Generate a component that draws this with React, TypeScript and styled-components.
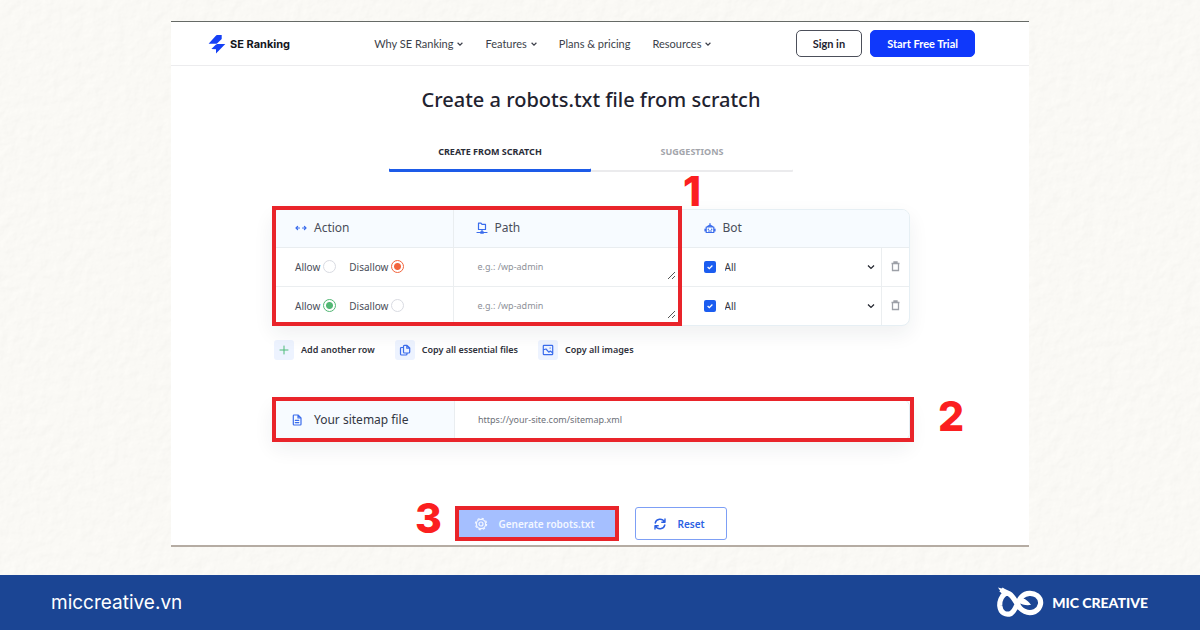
import React from "react";
import styled, { createGlobalStyle, css } from "styled-components";

const ui = '"Noto Sans", "Open Sans", sans-serif';
const brand = 'Lato, "Noto Sans", sans-serif';
const bold = 'Inter, "Liberation Sans", sans-serif';

const GlobalStyle = createGlobalStyle`
  *, *::before, *::after { box-sizing: border-box; }
  body { margin: 0; background: #faf9f5; font-family: ${ui}; color: #1f2330; }
  button, input, select, textarea { font: inherit; color: inherit; }
`;

const Page = styled.div`
  position: relative;
  display: flex;
  flex-direction: column;
  min-height: 100vh;
`;

const Paper = styled.svg`
  position: absolute;
  inset: 0;
  width: 100%;
  height: 100%;
`;

const Stage = styled.main`
  position: relative;
  flex: 1;
  padding: 21px 24px 28px;
`;

const Sheet = styled.section`
  max-width: 858px;
  margin: 0 auto;
  background: #fff;
  border-top: 1px solid #666a66;
  border-bottom: 2px solid #b5aca3;
`;

const TopBar = styled.header`
  display: flex;
  align-items: center;
  justify-content: space-between;
  height: 44px;
  padding: 0 54px 0 37px;
  border-bottom: 1px solid #ececee;
`;

const Logo = styled.a`
  display: flex;
  align-items: center;
  gap: 4px;
  color: #14161c;
  font: 700 11px/16px ${bold};
  text-decoration: none;
`;

const Nav = styled.nav`
  display: flex;
  gap: 22px;
`;

const NavLink = styled.a`
  display: flex;
  align-items: center;
  gap: 4px;
  color: #3c3f4a;
  font: 400 11px/16px ${brand};
  text-decoration: none;
`;

const Account = styled.div`
  display: flex;
  gap: 8px;
`;

const AccountButton = styled.button<{ $primary?: boolean }>`
  height: 27px;
  padding: 0 16px;
  border: 1px solid ${(p) => (p.$primary ? "#0f38fb" : "#4c4f5a")};
  border-radius: 5px;
  background: ${(p) => (p.$primary ? "#0f38fb" : "#fff")};
  color: ${(p) => (p.$primary ? "#fff" : "#1f2330")};
  font: 700 11px/16px ${brand};
`;

const Content = styled.div`
  padding: 19px 119px 4px 101px;
`;

const Title = styled.h1`
  margin: 0;
  text-align: center;
  font-size: 20px;
  line-height: 30px;
  font-weight: 500;
`;

const Tabs = styled.div`
  display: grid;
  grid-template-columns: 1fr 1fr;
  max-width: 404px;
  margin: 20px auto 0;
`;

const Tab = styled.button<{ $active?: boolean }>`
  height: 37px;
  padding: 0 0 3px;
  border: 0;
  border-radius: 1px;
  background: none;
  box-shadow: inset 0 ${(p) => (p.$active ? "-3px #1d5be8" : "-2px #ebebed")};
  color: ${(p) => (p.$active ? "#2a2d38" : "#a3a5ab")};
  font-size: 9px;
  line-height: 12px;
  font-weight: 700;
`;

const Marked = styled.div`
  position: relative;
`;

const RulesArea = styled(Marked)`
  margin-top: 37px;
`;

const Frame = styled.div<{ $right: string; $top: string; $bottom: string }>`
  position: absolute;
  left: 0;
  top: ${(p) => p.$top};
  right: ${(p) => p.$right};
  bottom: ${(p) => p.$bottom};
  border: 4px solid #e9242a;
  pointer-events: none;
`;

const Step = styled.span<{ $left: string; $top: string }>`
  position: absolute;
  left: ${(p) => p.$left};
  top: ${(p) => p.$top};
  color: #fb1f20;
  font: 800 41px/40px ${bold};
`;

const Card = styled.div`
  overflow: hidden;
  border: 1px solid #e6eff4;
  border-radius: 8px;
  background: #fff;
  box-shadow: 0 8px 20px rgba(30, 40, 60, 0.07);
`;

const Rules = styled.table`
  width: 100%;
  border-collapse: collapse;
  table-layout: fixed;
`;

const Head = styled.th`
  height: 37px;
  padding: 0;
  background: #f7fbff;
  border-bottom: 1px solid #e9edf0;
  text-align: left;
  font-weight: 400;
  & + & { border-left: 1px solid #e9edf0; }
  &:last-child { border-left-color: transparent; }
`;

const HeadLabel = styled.span`
  display: flex;
  align-items: center;
  gap: 7px;
  padding-left: 22px;
  color: #4a4e5a;
  font-size: 12px;
  line-height: 18px;
`;

const Cell = styled.td`
  position: relative;
  height: 39px;
  padding: 0;
  & + & { border-left: 1px solid #ebeef0; }
  tr + tr > & { border-top: 1px solid #ebeef0; }
`;

const Choices = styled.div`
  display: flex;
  gap: 13px;
  padding-left: 22px;
`;

const Choice = styled.label`
  display: flex;
  align-items: center;
  gap: 3px;
  color: #4a4e5a;
  font-size: 10px;
  line-height: 14px;
`;

const Radio = styled.input<{ $tone: string }>`
  appearance: none;
  width: 13px;
  height: 13px;
  margin: 0;
  border: 1px solid #d9dbe2;
  border-radius: 50%;
  background: #fff;
  &:checked {
    border-color: ${(p) => p.$tone};
    background: radial-gradient(circle, ${(p) => p.$tone} 0 3px, #fff 4px);
  }
`;

const PathBox = styled.textarea`
  display: block;
  width: 100%;
  height: 38px;
  padding: 12px 24px;
  border: 0;
  background: transparent;
  resize: none;
  overflow: hidden;
  font-size: 9px;
  line-height: 14px;
  &::placeholder { color: #8e9199; }
`;

const Grip = styled.svg`
  position: absolute;
  right: 5px;
  bottom: 6px;
`;

const BotChoice = styled.div`
  position: relative;
  display: flex;
  align-items: center;
  gap: 9px;
  padding: 0 6px 0 22px;
  svg { position: absolute; right: 6px; pointer-events: none; }
`;

const CheckWrap = styled.span`
  position: relative;
  display: flex;
  && svg { right: 2px; top: 2px; }
`;

const Check = styled.input`
  appearance: none;
  width: 12px;
  height: 12px;
  margin: 0;
  border-radius: 2px;
  background: #1b5df0;
`;

const BotSelect = styled.select`
  appearance: none;
  flex: 1;
  min-width: 0;
  padding: 0;
  border: 0;
  background: none;
  color: #33363f;
  font-size: 10px;
  line-height: 14px;
`;

const IconButton = styled.button`
  display: flex;
  justify-content: center;
  width: 100%;
  padding: 0;
  border: 0;
  background: none;
`;

const Extras = styled.div`
  display: flex;
  gap: 20px;
  margin-top: 14px;
  padding-left: 2px;
`;

const Extra = styled.button`
  display: flex;
  align-items: center;
  gap: 7px;
  padding: 0;
  border: 0;
  background: none;
  color: #2f323c;
  font-size: 9px;
  line-height: 14px;
  font-weight: 600;
`;

const Tile = styled.span`
  display: grid;
  place-items: center;
  width: 20px;
  height: 20px;
  border-radius: 3px;
  background: #edf3ff;
`;

const Sitemap = styled(Card)`
  display: grid;
  grid-template-columns: 182px 1fr;
  height: 42px;
  margin-top: 39px;
`;

const SitemapLabel = styled.label`
  display: flex;
  align-items: center;
  gap: 11px;
  padding-left: 18px;
  border-right: 1px solid #e9edf0;
  background: #f7fbff;
  color: #33363f;
  font-size: 12px;
  line-height: 18px;
`;

const SitemapInput = styled.input`
  min-width: 0;
  padding: 0 23px 2px;
  border: 0;
  font-size: 9px;
  &::placeholder { color: #6d7078; }
`;

const Actions = styled.div`
  display: flex;
  align-items: center;
  justify-content: center;
  gap: 16px;
  margin-top: 65px;
`;

const ActionButton = styled.button<{ $filled?: boolean }>`
  display: flex;
  align-items: center;
  justify-content: center;
  gap: 10px;
  height: 33px;
  padding: 0 21px 0 17px;
  border: 1px solid #7d9ff5;
  border-radius: 3px;
  background: #fff;
  color: #2b5fe3;
  font-size: 10px;
  line-height: 16px;
  font-weight: 600;
  ${(p) => p.$filled && css`
    height: 35px;
    padding: 0 21px 0 15px;
    border: 4px solid #e9242a;
    border-radius: 0;
    background: #a5bfff;
    color: #f3f7ff;
  `}
`;

const Footer = styled.footer`
  position: relative;
  display: flex;
  align-items: center;
  justify-content: space-between;
  height: 55px;
  padding: 0 52px 0 51px;
  background: #1b4594;
  color: #fff;
`;

const Site = styled.a`
  color: #fff;
  font: 400 19px/24px ${bold};
  text-decoration: none;
`;

const Maker = styled.div`
  display: flex;
  align-items: center;
  gap: 8px;
  font: 900 14px/20px ${brand};
`;

const Chevron = () => (
  <svg width="6" height="6" viewBox="0 0 6 6" fill="none" stroke="currentColor" strokeWidth="1.2"><path d="M.6 1.8 3 4.1 5.4 1.8" /></svg>
);

const blue = { fill: "none", stroke: "#3a6cec", strokeLinecap: "round", strokeLinejoin: "round" } as const;

const Row = ({ n, allow }: { n: number; allow: boolean }) => (
  <tr>
    <Cell>
      <Choices>
        <Choice>Allow<Radio $tone="#52b774" type="radio" name={`action-${n}`} defaultChecked={allow} /></Choice>
        <Choice>Disallow<Radio $tone="#f2643c" type="radio" name={`action-${n}`} defaultChecked={!allow} /></Choice>
      </Choices>
    </Cell>
    <Cell>
      <PathBox aria-label="Path" placeholder="e.g.: /wp-admin" />
      <Grip width="9" height="9" viewBox="0 0 9 9" stroke="#555" fill="none"><path d="M1 8 8 1M5 8 8 5" /></Grip>
    </Cell>
    <Cell>
      <BotChoice>
        <CheckWrap>
          <Check type="checkbox" aria-label="Use bot" defaultChecked />
          <svg width="8" height="8" viewBox="0 0 8 8" fill="none" stroke="#fff" strokeWidth="1.3"><path d="M1.6 4 3.3 5.6 6.4 2.5" /></svg>
        </CheckWrap>
        <BotSelect aria-label="Bot"><option>All</option></BotSelect>
        <svg width="8" height="8" viewBox="0 0 8 8" fill="none" stroke="#22252e" strokeWidth="1.3"><path d="M1 2.5 4 5.4 7 2.5" /></svg>
      </BotChoice>
    </Cell>
    <Cell>
      <IconButton aria-label="Delete row">
        <svg width="9" height="11" viewBox="0 0 9 11" fill="none" stroke="#9da0a7" strokeWidth="1.3"><path d="M.5 2.5h8M3 2.300V1h3v1.300M1.500 2.700V9.500h6V2.700" /></svg>
      </IconButton>
    </Cell>
  </tr>
);

export default function App() {
  return (
    <Page>
      <GlobalStyle />
      <Paper aria-hidden="true">
        <filter id="grain">
          <feTurbulence type="fractalNoise" baseFrequency="0.09" numOctaves="4" seed="4" />
          <feDiffuseLighting surfaceScale="0.5" lightingColor="#fdfcf8" diffuseConstant="1.13"><feDistantLight azimuth="45" elevation="60" /></feDiffuseLighting>
        </filter>
        <rect width="100%" height="100%" filter="url(#grain)" opacity="0.4" />
      </Paper>
      <Stage>
        <Sheet>
          <TopBar>
            <Logo href="#">
              <svg width="18" height="20" viewBox="0 0 18 20" fill="#1540f5"><path d="M.6 9.700 7.600 2 8.800 1H13.700V5L9.600 9 8.600 9.700zM3.400 14.900 7.700 10.700 9.300 10H17.300L8 19.600V15.200z" /></svg>
              SE Ranking
            </Logo>
            <Nav>
              <NavLink href="#">Why SE Ranking<Chevron /></NavLink>
              <NavLink href="#">Features<Chevron /></NavLink>
              <NavLink href="#">Plans &amp; pricing</NavLink>
              <NavLink href="#">Resources<Chevron /></NavLink>
            </Nav>
            <Account>
              <AccountButton>Sign in</AccountButton>
              <AccountButton $primary>Start Free Trial</AccountButton>
            </Account>
          </TopBar>
          <Content>
            <Title>Create a robots.txt file from scratch</Title>
            <Tabs role="tablist">
              <Tab role="tab" aria-selected="true" $active>CREATE FROM SCRATCH</Tab>
              <Tab role="tab" aria-selected="false">SUGGESTIONS</Tab>
            </Tabs>
            <RulesArea>
              <Card>
                <Rules>
                  <colgroup><col width="180" /><col /><col width="200" /><col width="28" /></colgroup>
                  <thead>
                    <tr>
                      <Head><HeadLabel>
                        <svg width="12" height="8" viewBox="0 0 12 8" {...blue} strokeWidth="1.2"><path d="M1 4h3.500M7.500 4H11M2.600 2.400 1 4l1.600 1.600M9.400 2.400 11 4l-1.600 1.600" /></svg>Action
                      </HeadLabel></Head>
                      <Head><HeadLabel>
                        <svg width="12" height="12" viewBox="0 0 12 12" {...blue} strokeWidth="1.2"><path d="M2.500 1.200H5l1 1.200h3.500V7.500h-7zM6 7.500V10M1 10.500h3.500M7.500 10.500H11M4.800 9.800h2.400v1.400H4.800z" /></svg>Path
                      </HeadLabel></Head>
                      <Head colSpan={2}><HeadLabel>
                        <svg width="12" height="12" viewBox="0 0 12 12" {...blue} strokeWidth="1.200"><path d="M2.200 5h7.600v5.500H2.200zM6 5V1.500M3.500 4.500 6 3l2.500 1.500M1 7v2M11 7v2M4.300 7v.4M7.700 7v.4M4.500 9h3" /></svg>Bot
                      </HeadLabel></Head>
                    </tr>
                  </thead>
                  <tbody><Row n={1} allow={false} /><Row n={2} allow /></tbody>
                </Rules>
              </Card>
              <Frame $right="228px" $top="-3px" $bottom="0" />
              <Step $left="411px" $top="-38px">1</Step>
            </RulesArea>
            <Extras>
              <Extra><Tile><svg width="10" height="10" viewBox="0 0 10 10" {...blue} stroke="#4cbb78"><path d="M5 1v8M1 5h8" /></svg></Tile>Add another row</Extra>
              <Extra><Tile><svg width="12" height="12" viewBox="0 0 12 12" {...blue} strokeWidth="1.2"><path d="M5.500 1.300H8L10.700 4v4q0 1-1 1H5.500q-1 0-1-1V2.300q0-1 1-1zM7.800 1.500V4.200h2.700M4.300 3.500H2.500q-1 0-1 1V10q0 1 1 1H7q1 0 1-1V9.200" /></svg></Tile>Copy all essential files</Extra>
              <Extra><Tile><svg width="12" height="12" viewBox="0 0 12 12" {...blue} strokeWidth="1.2"><path d="M2 1.300h8q.7 0 .7.7v8q0 .7-.7.7H2q-.7 0-.7-.7V2q0-.7.700-.7zM1.500 5.800 4 5l2.800 3.200L8.300 7l2.200 1.700M8 4h.3" /></svg></Tile>Copy all images</Extra>
            </Extras>
            <Marked>
              <Sitemap>
                <SitemapLabel htmlFor="sitemap">
                  <svg width="12" height="12" viewBox="0 0 12 12" {...blue} strokeWidth="1.2"><path d="M3 1h4l3 3v6.300q0 .7-.7.7H3q-.7 0-.7-.7V1.700Q2.300 1 3 1zM7 1v3h3M4.300 6.300h3.500M4.300 8.600h3.500" /></svg>
                  Your sitemap file
                </SitemapLabel>
                <SitemapInput id="sitemap" placeholder="https://your-site.com/sitemap.xml" />
              </Sitemap>
              <Frame $right="-4px" $top="-2px" $bottom="-1px" />
              <Step $left="666px" $top="-3px">2</Step>
            </Marked>
            <Marked>
              <Actions>
                <ActionButton $filled>
                  <svg width="14" height="14" viewBox="0 0 14 14" fill="none" stroke="#f3f7ff" strokeWidth="1.200"><circle cx="7" cy="7" r="2" /><circle cx="7" cy="7" r="4.600" /><circle cx="7" cy="7" r="5.600" strokeDasharray="2.200 2.200" /></svg>
                  Generate robots.txt
                </ActionButton>
                <ActionButton>
                  <svg width="14" height="12" viewBox="0 0 14 12" {...blue} stroke="#2b5fe3" strokeWidth="1.400"><path d="M2.200 5a4.900 4.900 0 0 1 9.200-1M12 1v3.200H8.800M11.800 7a4.900 4.900 0 0 1-9.200 1M2 11V7.800h3.200" /></svg>
                  Reset
                </ActionButton>
              </Actions>
              <Step $left="143px" $top="-8px">3</Step>
            </Marked>
          </Content>
        </Sheet>
      </Stage>
      <Footer>
        <Site href="#">miccreative.vn</Site>
        <Maker>
          <svg width="48" height="32" viewBox="0 0 48 32" fill="none" stroke="#fff" strokeWidth="5.200"><path d="M10 6C5 9 3.500 15 3.800 19 4.500 26 10 28.500 15 26.500 20.500 23 21 14 26 9.500 30 5.500 37 5.500 41 8.500 47 13.500 45 21 39 24.500 33 27 28 25 24 21 20 16 18 10 13.500 7 11 5.300 8 5 5 2.500" /><path d="M2 .5 8.500 2.200 12 5 7 8zM22 10C27 10.500 32 13 35 18 30 18.500 26 18 22 15z" fill="#fff" stroke="none" /></svg>
          MIC CREATIVE
        </Maker>
      </Footer>
    </Page>
  );
}
